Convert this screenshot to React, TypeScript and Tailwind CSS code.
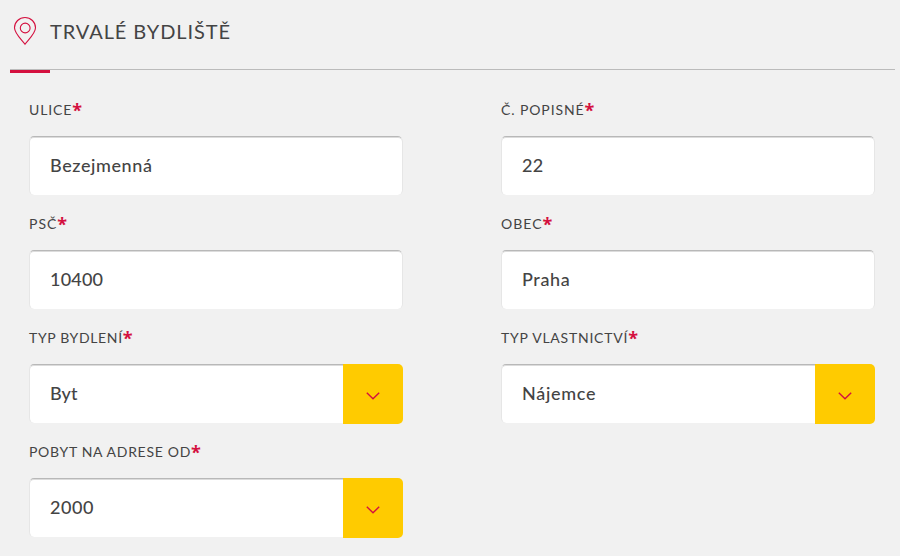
import clsx from "clsx";

type FieldProps = {
  label: string;
  value: string;
  labelClass?: string;
  valueClass?: string;
  select?: boolean;
};

function PinIcon() {
  return (
    <svg width="24" height="30" viewBox="0 0 24 30" fill="none" stroke="#d4103f" strokeWidth="1.1">
      <path d="M12 28.2C9.6 24.6 1.5 17.6 1.5 11.7a10.5 10.2 0 0 1 21 0C22.5 17.6 14.4 24.6 12 28.2Z" />
      <circle cx="12.2" cy="12" r="4.9" />
    </svg>
  );
}

function Chevron() {
  return (
    <svg width="14" height="8" viewBox="0 0 14 8" fill="none" stroke="#d4103f" strokeWidth="1.4">
      <path d="M0.8 0.8L7 6.8L13.2 0.8" />
    </svg>
  );
}

function Field({ label, value, labelClass, valueClass, select }: FieldProps) {
  return (
    <div className="h-[114px] w-[374px]">
      <div className="flex h-[37px] items-start pt-px text-[14px] leading-5 whitespace-nowrap">
        <span className={labelClass}>{label}</span>
        <span className="font-['Open_Sans'] text-[18px] leading-[20px] font-bold text-[#d4103f]">*</span>
      </div>
      <div className="flex h-[60px] items-start justify-between overflow-hidden rounded-r-[5px]">
        <div
          className={clsx(
            "flex h-[59px] flex-1 items-center rounded-l-[5px] border-x border-t border-x-[#e6e6e6] border-t-[#b8b8b8] bg-white pb-0.5 pl-5 text-[18px] font-medium shadow-[inset_0_1px_0_#dcdcdc]",
            select ? "border-r-0" : "rounded-r-[5px]"
          )}
        >
          <span className={valueClass}>{value}</span>
        </div>
        {select && (
          <button className="flex h-[60px] w-[60px] items-center justify-center bg-[#ffcb00] pt-1">
            <Chevron />
          </button>
        )}
      </div>
    </div>
  );
}

export default function App() {
  return (
    <div className="h-[556px] w-[900px] overflow-hidden bg-[#f1f1f1] pl-[10px] font-[Lato,sans-serif] text-[#444]">
      <div className="mr-[5px] flex h-[70px] items-start border-b border-[#bbb] pt-4 pl-[3px]">
        <PinIcon />
        <h1 className="ml-[13px] text-[20px] leading-[30px] tracking-[0.92px]">TRVALÉ BYDLIŠTĚ</h1>
      </div>
      <div className="h-[3px] w-10 bg-[#d4103f]" />

      <div className="grid grid-cols-[472px_374px] pt-[26px] pl-[19px]">
        <Field label="ULICE" value="Bezejmenná" labelClass="tracking-[0.9px]" valueClass="tracking-[0.6px]" />
        <Field label="Č. POPISNÉ" value="22" labelClass="tracking-[0.9px]" valueClass="tracking-[0.4px]" />
        <Field label="PSČ" value="10400" labelClass="tracking-[1px]" valueClass="tracking-[0.2px]" />
        <Field label="OBEC" value="Praha" labelClass="tracking-[1px]" valueClass="tracking-[0.6px]" />
        <Field label="TYP BYDLENÍ" value="Byt" labelClass="tracking-[0.65px]" valueClass="tracking-[0.1px]" select />
        <Field label="TYP VLASTNICTVÍ" value="Nájemce" labelClass="tracking-[0.76px]" valueClass="tracking-[0.7px]" select />
        <Field label="POBYT NA ADRESE OD" value="2000" labelClass="tracking-[0.7px]" valueClass="tracking-[0.6px]" select />
      </div>
    </div>
  );
}
